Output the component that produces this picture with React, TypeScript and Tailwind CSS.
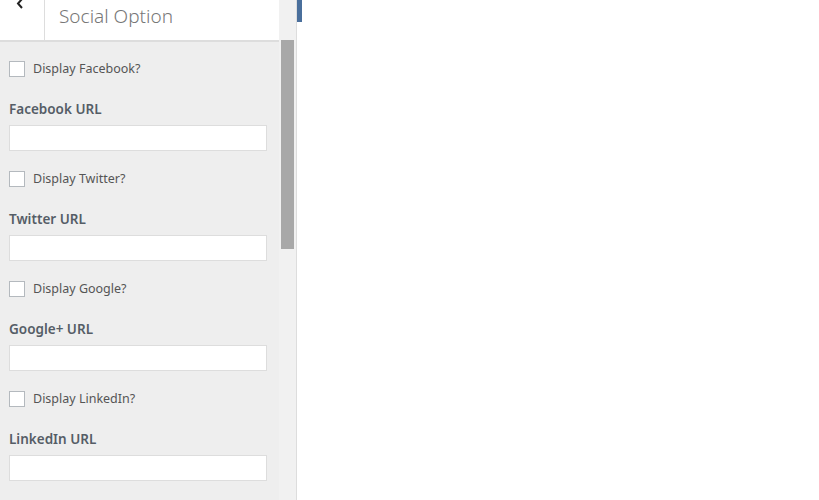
const networks = [
  { check: "Display Facebook?", label: "Facebook URL" },
  { check: "Display Twitter?", label: "Twitter URL" },
  { check: "Display Google?", label: "Google+ URL" },
  { check: "Display LinkedIn?", label: "LinkedIn URL" },
];

function SocialField({ check, label }: { check: string; label: string }) {
  return (
    <div className="h-[110px] pt-[19px]">
      <label className="flex items-center h-[16px] pl-[9px]">
        <span className="w-[16px] h-[16px] border border-[#b4b9be] bg-white shrink-0" />
        <span className="ml-[8px] text-[12.5px] text-[#555] leading-none">{check}</span>
      </label>
      <div className="mt-[22px] pl-[9px] text-[13.5px] font-semibold text-[#555d66] leading-[20px]">
        {label}
      </div>
      <div className="mt-[6px] ml-[9px] w-[258px] h-[26px] bg-white border border-[#ddd]" />
    </div>
  );
}

export default function App() {
  return (
    <div
      className="flex w-[819px] h-[500px] bg-white overflow-hidden"
      style={{ fontFamily: '"Noto Sans", "Open Sans", sans-serif' }}
    >
      <div className="flex w-[297px] border-r border-[#ddd] shrink-0">
        <div className="w-[279px] bg-[#eee] flex flex-col">
          <div className="flex h-[42px] bg-white border-b-2 border-[#ddd] shrink-0">
            <div className="w-[45px] border-r border-[#ddd] relative">
              <svg
                className="absolute left-[14px] -top-[2px]"
                width="12"
                height="12"
                viewBox="0 0 12 12"
              >
                <path d="M8 1 L4 5.5 L8 10" fill="none" stroke="#222" strokeWidth="2" />
              </svg>
            </div>
            <div className="pl-[14px] text-[19px] text-[#777] font-light leading-[32px]">
              Social Option
            </div>
          </div>
          <div className="flex-1">
            {networks.map((n) => (
              <SocialField key={n.label} check={n.check} label={n.label} />
            ))}
          </div>
        </div>
        <div className="flex-1 bg-[#f1f1f1] pt-[40px] px-[2px]">
          <div className="h-[209px] bg-[#a8a8a8]" />
        </div>
      </div>
      <div className="w-[5px] h-[22px] bg-[#4a6f9c]" />
    </div>
  );
}
